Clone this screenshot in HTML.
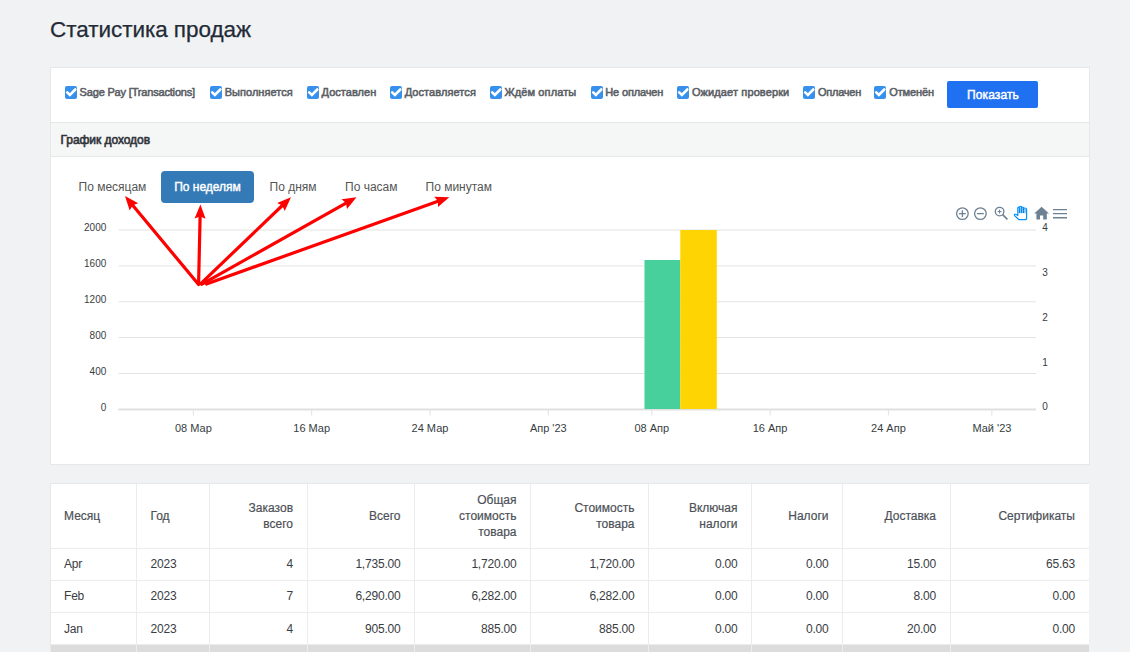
<!DOCTYPE html>
<html><head><meta charset="utf-8">
<style>
*{box-sizing:border-box;margin:0;padding:0}
html,body{width:1130px;height:652px;overflow:hidden}
body{background:#f0f2f4;font-family:"Liberation Sans",sans-serif;position:relative;color:#333}
.title{position:absolute;left:50px;top:15.5px;font-size:22.5px;line-height:28px;color:#232a36;white-space:nowrap;letter-spacing:-0.05px;-webkit-text-stroke:0.25px #232a36}
.card{position:absolute;left:50px;top:67px;width:1040px;height:398px;background:#fff;border:1px solid #e6e8ea}
.ck{position:absolute;top:86px;width:12px;height:13px;border-radius:2px;background:#3790ec}
.ck svg{position:absolute;left:0;top:0}
.fl{position:absolute;top:85px;height:14px;line-height:14px;white-space:nowrap;font-size:11px;font-weight:normal;color:#5a5e65;-webkit-text-stroke:0.55px #5a5e65}
.btn{position:absolute;left:947px;top:81px;width:91px;height:27px;background:#2071f2;border-radius:2px;color:#fff;font-weight:normal;font-size:12px;text-align:center;line-height:28px;letter-spacing:0.1px;padding-left:1px;-webkit-text-stroke:0.45px #fff}
.hdr{position:absolute;left:51px;top:122px;width:1038px;height:35px;background:#f5f6f6;border-top:1px solid #e6e7e8;border-bottom:1px solid #e6e7e8}
.hdr span{position:absolute;left:9.5px;top:10px;font-size:12px;line-height:14px;font-weight:normal;color:#30343a;letter-spacing:-0.05px;-webkit-text-stroke:0.6px #30343a}
.tab{position:absolute;top:171px;height:32px;line-height:32px;font-size:12px;color:#555;white-space:nowrap}
.tab.act{left:161px;width:93px;background:#337ab7;color:#fff;border-radius:4px;font-weight:normal;text-align:center;letter-spacing:0px;-webkit-text-stroke:0.4px #fff}
.ch{position:absolute;left:0;top:0}
.ch text{font-family:"Liberation Sans",sans-serif}
.tcard{position:absolute;left:50px;top:483px;width:1039px;height:200px;background:#fff;border:1px solid #e7e8ea;border-right:none}
.vl{position:absolute;top:484px;width:1px;height:161px;background:#eaecee}
.vlg{position:absolute;top:645px;width:1px;height:10px;background:#eaecee}
.hl{position:absolute;left:51px;width:1038px;height:1px;background:#eaecee}
.gray{position:absolute;left:51px;top:645px;width:1038px;height:10px;background:#dcdcdc}
.th,.td{position:absolute;height:16px;line-height:16px;font-size:12px;white-space:nowrap}
.th{color:#4d5157;-webkit-text-stroke:0.2px #4d5157}
.td{color:#3a3d42;letter-spacing:-0.2px}
</style></head><body>
<div class="title">Статистика продаж</div>
<div class="card"></div>
<div class="ck" style="left:65px"><svg width="13" height="13" viewBox="0 0 13 13"><path d="M2.2 6.3 L4.9 9 L10.3 3.5" fill="none" stroke="#fff" stroke-width="2.6" stroke-linecap="round" stroke-linejoin="miter"/></svg></div><div class="fl" style="left:79.6px;letter-spacing:-0.176px">Sage Pay [Transactions]</div><div class="ck" style="left:210px"><svg width="13" height="13" viewBox="0 0 13 13"><path d="M2.2 6.3 L4.9 9 L10.3 3.5" fill="none" stroke="#fff" stroke-width="2.6" stroke-linecap="round" stroke-linejoin="miter"/></svg></div><div class="fl" style="left:224.7px;letter-spacing:0.031px">Выполняется</div><div class="ck" style="left:306.5px"><svg width="13" height="13" viewBox="0 0 13 13"><path d="M2.2 6.3 L4.9 9 L10.3 3.5" fill="none" stroke="#fff" stroke-width="2.6" stroke-linecap="round" stroke-linejoin="miter"/></svg></div><div class="fl" style="left:321.6px;letter-spacing:0.029px">Доставлен</div><div class="ck" style="left:390px"><svg width="13" height="13" viewBox="0 0 13 13"><path d="M2.2 6.3 L4.9 9 L10.3 3.5" fill="none" stroke="#fff" stroke-width="2.6" stroke-linecap="round" stroke-linejoin="miter"/></svg></div><div class="fl" style="left:404.7px;letter-spacing:0.081px">Доставляется</div><div class="ck" style="left:490px"><svg width="13" height="13" viewBox="0 0 13 13"><path d="M2.2 6.3 L4.9 9 L10.3 3.5" fill="none" stroke="#fff" stroke-width="2.6" stroke-linecap="round" stroke-linejoin="miter"/></svg></div><div class="fl" style="left:504.4px;letter-spacing:0.125px">Ждём оплаты</div><div class="ck" style="left:591px"><svg width="13" height="13" viewBox="0 0 13 13"><path d="M2.2 6.3 L4.9 9 L10.3 3.5" fill="none" stroke="#fff" stroke-width="2.6" stroke-linecap="round" stroke-linejoin="miter"/></svg></div><div class="fl" style="left:605.3px;letter-spacing:-0.152px">Не оплачен</div><div class="ck" style="left:677px"><svg width="13" height="13" viewBox="0 0 13 13"><path d="M2.2 6.3 L4.9 9 L10.3 3.5" fill="none" stroke="#fff" stroke-width="2.6" stroke-linecap="round" stroke-linejoin="miter"/></svg></div><div class="fl" style="left:691.9px;letter-spacing:0.122px">Ожидает проверки</div><div class="ck" style="left:803px"><svg width="13" height="13" viewBox="0 0 13 13"><path d="M2.2 6.3 L4.9 9 L10.3 3.5" fill="none" stroke="#fff" stroke-width="2.6" stroke-linecap="round" stroke-linejoin="miter"/></svg></div><div class="fl" style="left:818px;letter-spacing:-0.247px">Оплачен</div><div class="ck" style="left:874px"><svg width="13" height="13" viewBox="0 0 13 13"><path d="M2.2 6.3 L4.9 9 L10.3 3.5" fill="none" stroke="#fff" stroke-width="2.6" stroke-linecap="round" stroke-linejoin="miter"/></svg></div><div class="fl" style="left:889.2px;letter-spacing:-0.107px">Отменён</div>
<div class="btn">Показать</div>
<div class="hdr"><span>График доходов</span></div>
<div class="tab" style="left:78.5px">По месяцам</div>
<div class="tab act">По неделям</div>
<div class="tab" style="left:269.5px">По дням</div>
<div class="tab" style="left:345px">По часам</div>
<div class="tab" style="left:425.5px">По минутам</div>
<svg class="ch" width="1130" height="652" viewBox="0 0 1130 652"><line x1="118.5" y1="230" x2="1036" y2="230" stroke="#e3e3e3" stroke-width="1"/><line x1="118.5" y1="265.9" x2="1036" y2="265.9" stroke="#e3e3e3" stroke-width="1"/><line x1="118.5" y1="301.75" x2="1036" y2="301.75" stroke="#e3e3e3" stroke-width="1"/><line x1="118.5" y1="337.6" x2="1036" y2="337.6" stroke="#e3e3e3" stroke-width="1"/><line x1="118.5" y1="373.5" x2="1036" y2="373.5" stroke="#e3e3e3" stroke-width="1"/><line x1="118.5" y1="409.5" x2="1036" y2="409.5" stroke="#e0e0e0" stroke-width="2"/><line x1="193.4" y1="410.5" x2="193.4" y2="415.5" stroke="#e0e0e0" stroke-width="1"/><line x1="311.7" y1="410.5" x2="311.7" y2="415.5" stroke="#e0e0e0" stroke-width="1"/><line x1="430" y1="410.5" x2="430" y2="415.5" stroke="#e0e0e0" stroke-width="1"/><line x1="548.3" y1="410.5" x2="548.3" y2="415.5" stroke="#e0e0e0" stroke-width="1"/><line x1="651.8" y1="410.5" x2="651.8" y2="415.5" stroke="#e0e0e0" stroke-width="1"/><line x1="770.1" y1="410.5" x2="770.1" y2="415.5" stroke="#e0e0e0" stroke-width="1"/><line x1="888.4" y1="410.5" x2="888.4" y2="415.5" stroke="#e0e0e0" stroke-width="1"/><line x1="991.9" y1="410.5" x2="991.9" y2="415.5" stroke="#e0e0e0" stroke-width="1"/><rect x="644.5" y="260" width="35.8" height="149" fill="#47d09b"/><rect x="680.3" y="230" width="36.5" height="179" fill="#fed402"/><text x="106.3" y="231.1" text-anchor="end" font-size="10" fill="#373d3f">2000</text><text x="106.3" y="267.1" text-anchor="end" font-size="10" fill="#373d3f">1600</text><text x="106.3" y="303.1" text-anchor="end" font-size="10" fill="#373d3f">1200</text><text x="106.3" y="339.1" text-anchor="end" font-size="10" fill="#373d3f">800</text><text x="106.3" y="375.1" text-anchor="end" font-size="10" fill="#373d3f">400</text><text x="106.3" y="410.6" text-anchor="end" font-size="10" fill="#373d3f">0</text><text x="1042.3" y="231.1" font-size="10" fill="#373d3f">4</text><text x="1042.3" y="276.1" font-size="10" fill="#373d3f">3</text><text x="1042.3" y="321.1" font-size="10" fill="#373d3f">2</text><text x="1042.3" y="366.1" font-size="10" fill="#373d3f">1</text><text x="1042.3" y="410.1" font-size="10" fill="#373d3f">0</text><text x="193.4" y="432" text-anchor="middle" font-size="11" fill="#373d3f">08 Мар</text><text x="311.7" y="432" text-anchor="middle" font-size="11" fill="#373d3f">16 Мар</text><text x="430" y="432" text-anchor="middle" font-size="11" fill="#373d3f">24 Мар</text><text x="548.3" y="432" text-anchor="middle" font-size="11" fill="#373d3f">Апр '23</text><text x="651.8" y="432" text-anchor="middle" font-size="11" fill="#373d3f">08 Апр</text><text x="770.1" y="432" text-anchor="middle" font-size="11" fill="#373d3f">16 Апр</text><text x="888.4" y="432" text-anchor="middle" font-size="11" fill="#373d3f">24 Апр</text><text x="991.9" y="432" text-anchor="middle" font-size="11" fill="#373d3f">Май '23</text><circle cx="962.4" cy="213.6" r="5.8" fill="none" stroke="#6e8192" stroke-width="1.3"/><path d="M962.4 210.2 V217 M959 213.6 H965.8" stroke="#6e8192" stroke-width="1.3"/><circle cx="980.4" cy="213.6" r="5.8" fill="none" stroke="#6e8192" stroke-width="1.3"/><path d="M977 213.6 H983.8" stroke="#6e8192" stroke-width="1.3"/><circle cx="999.6" cy="211.6" r="4.3" fill="none" stroke="#6e8192" stroke-width="1.3"/><path d="M1002.6 214.6 L1007.4 219.4" stroke="#6e8192" stroke-width="1.6"/><path d="M999.6 209.6 V213.6 M997.6 211.6 H1001.6" stroke="#6e8192" stroke-width="1"/><path d="M1017.8 215.5 V208.2 Q1017.8 207.2 1018.7 207.2 Q1019.6 207.2 1019.6 208 V207.3 Q1019.6 206.4 1020.6 206.4 Q1021.6 206.4 1021.6 207.3 V207.8 Q1021.8 207 1022.6 207 Q1023.5 207 1023.5 208 V208.6 Q1023.7 208 1024.6 208 Q1026.6 208 1026.6 209.6 V218.6 Q1026.6 219.6 1025.6 219.6 H1018.8 L1014.6 215.6 Q1014 214.8 1014.8 214.4 Q1015.6 214 1016.4 214.6 Z" fill="#fff" stroke="#008ffb" stroke-width="1.2" stroke-linejoin="round"/><path d="M1018.2 208 H1026.2 V213.2 H1018.2 Z" fill="#3aa6fc" opacity="0.6"/><path d="M1019.6 208.2 V213 M1021.6 207.6 V213 M1023.5 208.4 V213" stroke="#0a7ee0" stroke-width="1"/><path d="M1041.6 206.8 L1034.2 213.4 H1036.4 V219.6 H1040 V215.6 H1043.2 V219.6 H1046.8 V213.4 H1049 Z" fill="#6e8192"/><path d="M1053 209.6 H1067 M1053 213.6 H1067 M1053 217.8 H1067" stroke="#6e8192" stroke-width="1.4"/><line x1="198.6" y1="284.5" x2="132.7" y2="205.3" stroke="#f00" stroke-width="3.2" stroke-linecap="round"/><path d="M125.0 196.1 L138.2 203.3 L132.7 205.3 L129.7 210.4 Z" fill="#f00"/><line x1="198.6" y1="283.6" x2="200.1" y2="216.6" stroke="#f00" stroke-width="3.2" stroke-linecap="round"/><path d="M200.4 204.6 L205.6 218.7 L200.1 216.6 L194.6 218.5 Z" fill="#f00"/><line x1="200.8" y1="283.6" x2="282.3" y2="205.5" stroke="#f00" stroke-width="3.2" stroke-linecap="round"/><path d="M291.0 197.2 L284.7 210.9 L282.3 205.5 L277.1 202.9 Z" fill="#f00"/><line x1="202.0" y1="284.2" x2="346.0" y2="203.1" stroke="#f00" stroke-width="3.2" stroke-linecap="round"/><path d="M356.5 197.2 L347.0 208.9 L346.0 203.1 L341.6 199.3 Z" fill="#f00"/><line x1="206.5" y1="284.0" x2="438.0" y2="201.2" stroke="#f00" stroke-width="3.2" stroke-linecap="round"/><path d="M449.3 197.2 L438.0 207.1 L438.0 201.2 L434.3 196.7 Z" fill="#f00"/></svg>
<div class="tcard"></div>
<div class="vl" style="left:136.0px"></div><div class="vl" style="left:208.5px"></div><div class="vl" style="left:306.5px"></div><div class="vl" style="left:414.0px"></div><div class="vl" style="left:530.0px"></div><div class="vl" style="left:648.0px"></div><div class="vl" style="left:751.0px"></div><div class="vl" style="left:842.0px"></div><div class="vl" style="left:949.5px"></div><div class="hl" style="top:548.0px"></div><div class="hl" style="top:580.0px"></div><div class="hl" style="top:612.0px"></div><div class="hl" style="top:644.0px"></div><div class="gray"></div><div class="vlg" style="left:136.0px"></div><div class="vlg" style="left:208.5px"></div><div class="vlg" style="left:306.5px"></div><div class="vlg" style="left:414.0px"></div><div class="vlg" style="left:530.0px"></div><div class="vlg" style="left:648.0px"></div><div class="vlg" style="left:751.0px"></div><div class="vlg" style="left:842.0px"></div><div class="vlg" style="left:949.5px"></div><div class="th" style="left:64px;top:508.0px">Месяц</div><div class="th" style="left:150.5px;top:508.0px">Год</div><div class="th r" style="right:837px;top:499.85px">Заказов</div><div class="th r" style="right:837px;top:516.15px">всего</div><div class="th r" style="right:729.5px;top:508.0px">Всего</div><div class="th r" style="right:613.5px;top:491.7px">Общая</div><div class="th r" style="right:613.5px;top:508.0px">стоимость</div><div class="th r" style="right:613.5px;top:524.3px">товара</div><div class="th r" style="right:495.5px;top:499.85px">Стоимость</div><div class="th r" style="right:495.5px;top:516.15px">товара</div><div class="th r" style="right:392.5px;top:499.85px">Включая</div><div class="th r" style="right:392.5px;top:516.15px">налоги</div><div class="th r" style="right:301.5px;top:508.0px">Налоги</div><div class="th r" style="right:194px;top:508.0px">Доставка</div><div class="th r" style="right:55px;top:508.0px">Сертификаты</div><div class="td" style="left:64px;top:555.8px">Apr</div><div class="td" style="left:150.5px;top:555.8px">2023</div><div class="td r" style="right:837px;top:555.8px">4</div><div class="td r" style="right:729.5px;top:555.8px">1,735.00</div><div class="td r" style="right:613.5px;top:555.8px">1,720.00</div><div class="td r" style="right:495.5px;top:555.8px">1,720.00</div><div class="td r" style="right:392.5px;top:555.8px">0.00</div><div class="td r" style="right:301.5px;top:555.8px">0.00</div><div class="td r" style="right:194px;top:555.8px">15.00</div><div class="td r" style="right:55px;top:555.8px">65.63</div><div class="td" style="left:64px;top:588.2px">Feb</div><div class="td" style="left:150.5px;top:588.2px">2023</div><div class="td r" style="right:837px;top:588.2px">7</div><div class="td r" style="right:729.5px;top:588.2px">6,290.00</div><div class="td r" style="right:613.5px;top:588.2px">6,282.00</div><div class="td r" style="right:495.5px;top:588.2px">6,282.00</div><div class="td r" style="right:392.5px;top:588.2px">0.00</div><div class="td r" style="right:301.5px;top:588.2px">0.00</div><div class="td r" style="right:194px;top:588.2px">8.00</div><div class="td r" style="right:55px;top:588.2px">0.00</div><div class="td" style="left:64px;top:621px">Jan</div><div class="td" style="left:150.5px;top:621px">2023</div><div class="td r" style="right:837px;top:621px">4</div><div class="td r" style="right:729.5px;top:621px">905.00</div><div class="td r" style="right:613.5px;top:621px">885.00</div><div class="td r" style="right:495.5px;top:621px">885.00</div><div class="td r" style="right:392.5px;top:621px">0.00</div><div class="td r" style="right:301.5px;top:621px">0.00</div><div class="td r" style="right:194px;top:621px">20.00</div><div class="td r" style="right:55px;top:621px">0.00</div>
</body></html>
